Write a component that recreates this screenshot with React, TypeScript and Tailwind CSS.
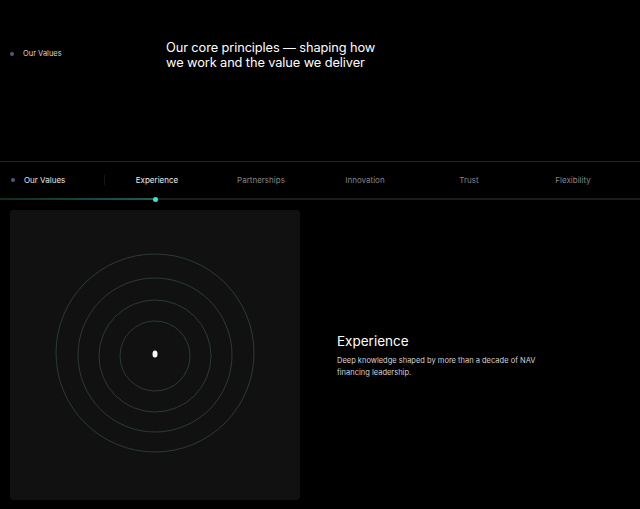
import { useState } from 'react';

const tabs = ['Experience', 'Partnerships', 'Innovation', 'Trust', 'Flexibility'];

const values: Record<string, string> = {
  Experience: 'Deep knowledge shaped by more than a decade of NAV financing leadership.',
  Partnerships: 'Long-term relationships built on alignment and shared outcomes.',
  Innovation: 'Creative structures designed around each portfolio.',
  Trust: 'Transparent, dependable execution at every stage.',
  Flexibility: 'Solutions tailored to the needs of every sponsor.',
};

const Rings = () => (
  <svg width="290" height="290" viewBox="0 0 290 290" fill="none">
    <circle cx="145" cy="143" r="99" stroke="#2c3a3a" strokeWidth="1" />
    <circle cx="145" cy="145" r="77" stroke="#2c3a3a" strokeWidth="1" />
    <circle cx="145" cy="146" r="56" stroke="#2c3a3a" strokeWidth="1" />
    <circle cx="145" cy="146" r="35" stroke="#2c3a3a" strokeWidth="1" />
    <ellipse cx="145" cy="144" rx="2.5" ry="3.5" fill="#ffffff" />
  </svg>
);

const App = () => {
  const [active, setActive] = useState('Experience');

  return (
    <div className="w-[640px] h-[509px] bg-black text-white overflow-hidden" style={{ fontFamily: 'Inter, "Liberation Sans", sans-serif' }}>
      {/* Intro */}
      <div className="h-[161px] flex pt-[40px]">
        <div className="w-[166px] flex items-start pl-[10px] pt-[9px] gap-[9px]">
          <span className="w-[4px] h-[4px] rounded-full bg-[#4b5d7a] mt-[3px]"></span>
          <span className="text-[7.5px] text-[#d4d4d4] leading-[10px]">Our Values</span>
        </div>
        <h1 className="text-[12.8px] leading-[15px] tracking-[-0.1px] text-white font-normal">
          Our core principles — shaping how
          <br />
          we work and the value we deliver
        </h1>
      </div>

      {/* Tabs */}
      <div className="border-t border-[#262626] relative">
        <div className="h-[36px] flex items-center">
          <div className="w-[105px] h-full flex items-center pl-[11px] gap-[9px] relative">
            <span className="w-[4px] h-[4px] rounded-full bg-[#4b5d7a]"></span>
            <span className="text-[8px] text-[#e5e5e5]">Our Values</span>
            <span className="absolute right-0 top-[13px] h-[10px] w-px bg-[#161616]"></span>
          </div>
          {tabs.map((t) => (
            <button
              key={t}
              onClick={() => setActive(t)}
              className={`w-[104px] h-full flex items-center justify-center text-[8px] ${active === t ? 'text-[#ececec]' : 'text-[#858585]'}`}
            >
              {t}
            </button>
          ))}
        </div>
        <div className="h-[2px] bg-[#1c1c1c] relative">
          <div className="absolute left-0 top-0 h-[2px] w-[155px] bg-gradient-to-r from-[#0f2a27] to-[#1d5e55]"></div>
          <span className="absolute left-[153px] top-[-1.5px] w-[5px] h-[5px] rounded-full bg-[#35e6d0]"></span>
        </div>
      </div>

      {/* Content */}
      <div className="flex p-[10px]">
        <div className="w-[290px] h-[290px] rounded-[4px] bg-[#111111]">
          <Rings />
        </div>
        <div className="flex flex-col justify-center pl-[37px] pt-[2px]">
          <h2 className="text-[13.5px] leading-[16px] text-white mb-[6px]">{active}</h2>
          <p className="text-[7.5px] leading-[12px] text-[#d4d4d4] w-[215px]">{values[active]}</p>
        </div>
      </div>
    </div>
  );
};

export default App;
